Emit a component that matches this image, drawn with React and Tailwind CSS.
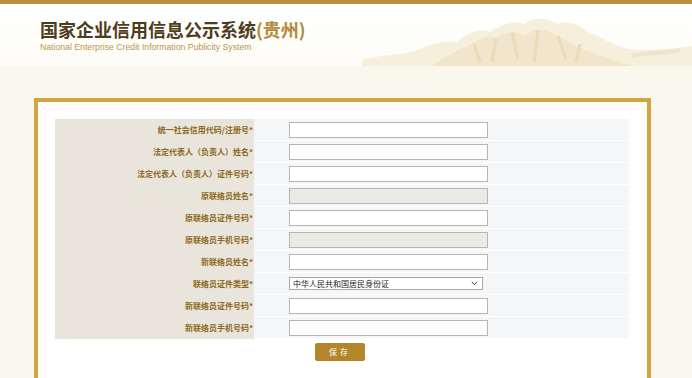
import React from 'react';

const rows = [
  { label: '统一社会信用代码/注册号', type: 'input' },
  { label: '法定代表人（负责人）姓名', type: 'input' },
  { label: '法定代表人（负责人）证件号码', type: 'input' },
  { label: '原联络员姓名', type: 'disabled' },
  { label: '原联络员证件号码', type: 'input' },
  { label: '原联络员手机号码', type: 'disabled' },
  { label: '新联络员姓名', type: 'input' },
  { label: '联络员证件类型', type: 'select' },
  { label: '新联络员证件号码', type: 'input' },
  { label: '新联络员手机号码', type: 'input' },
];

const cjk = { fontFamily: '"Noto Sans CJK SC", "Noto Sans", sans-serif' };

function Mountains() {
  return (
    <svg width="330" height="56" viewBox="0 0 330 56">
      <path d="M0 50 C20 44 40 46 55 40 C70 34 80 30 95 32 C105 22 118 18 128 22 C140 14 152 10 162 14 C172 6 186 8 196 14 C206 10 216 14 226 22 C238 26 248 34 262 38 C280 42 300 40 330 36 L330 56 L0 56 Z" fill="#f6efdc" />
      <path d="M70 56 C85 46 98 38 110 34 C118 28 126 24 134 28 C144 22 154 20 162 26 C172 18 182 18 192 24 C204 30 214 36 228 42 C244 48 258 52 272 56 Z" fill="#f1e6cb" />
      <path d="M112 34 L118 52 M134 28 L130 52 M150 22 L156 50 M176 20 L172 52 M196 26 L204 50 M218 34 L214 52" stroke="#eadcb8" strokeWidth="3" fill="none" />
      <path d="M270 46 C285 42 300 44 318 40" stroke="#eee4cc" strokeWidth="4" fill="none" />
    </svg>
  );
}

function Field({ type }) {
  if (type === 'select') {
    return (
      <div className="relative w-[194px] h-[13px]">
        <select
          className="appearance-none block w-[194px] h-[13px] m-0 py-0 border border-[#a9a9a9] bg-white text-[8px] leading-[11px] pl-[3px] text-[#222]"
          style={cjk}
          defaultValue="id"
        >
          <option value="id">中华人民共和国居民身份证</option>
        </select>
        <svg className="absolute right-[5px] top-[4px]" width="7" height="5" viewBox="0 0 7 5">
          <path d="M0.8 0.8 L3.5 3.8 L6.2 0.8" stroke="#444" strokeWidth="1" fill="none" />
        </svg>
      </div>
    );
  }
  return (
    <div
      className={`w-[199px] h-[16px] border border-[#b5b5b5] ${type === 'disabled' ? 'bg-[#ebebe4]' : 'bg-white'}`}
    />
  );
}

export default function App() {
  return (
    <div className="w-[692px] h-[378px] overflow-hidden bg-[#faf7ec]">
      <div className="h-[4px] bg-[#b8903e]" />
      <div className="h-[62px] bg-gradient-to-b from-white to-[#fdfcf7] flex items-end justify-between">
        <div className="pl-[40px] pb-[14px] flex flex-col">
          <div className="text-[18px] font-bold leading-[22px] text-[#4e3c1c] tracking-[0px]" style={cjk}>
            国家企业信用信息公示系统<span className="text-[#b28a3a]">(贵州)</span>
          </div>
          <div className="text-[8.7px] leading-[10px] text-[#b9994c] mt-[2px]" style={{ fontFamily: '"Liberation Sans", Arial, sans-serif' }}>
            National Enterprise Credit Information Publicity System
          </div>
        </div>
        <Mountains />
      </div>
      <div className="pt-[32px] pl-[34px]">
        <div className="w-[617px] h-[300px] border-4 border-b-0 border-[#d3a440] bg-white pt-[17px] pl-[17px]">
          <div className="w-[574px] flex flex-col">
            {rows.map((r) => (
              <div key={r.label} className="flex h-[22px]">
                <div
                  className="w-[199px] bg-[#e9e4dc] flex items-center justify-end pr-[1px] text-[8px] font-bold text-[#8d6a22]"
                  style={cjk}
                >
                  {r.label}*
                </div>
                <div className="flex-1 bg-[#f5f6f8] border-b border-white flex items-center pl-[35px]">
                  <Field type={r.type} />
                </div>
              </div>
            ))}
          </div>
          <div className="pl-[260px] pt-[4px]">
            <button
              className="w-[50px] h-[18px] rounded-[2px] bg-[#b4862c] text-white text-[8px] tracking-[3px] flex items-center justify-center"
              style={cjk}
            >
              保存
            </button>
          </div>
        </div>
      </div>
    </div>
  );
}
